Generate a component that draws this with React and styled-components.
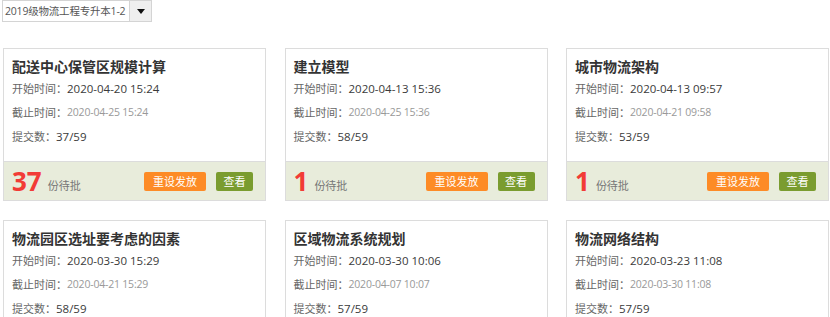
import React from "react";
import styled, { createGlobalStyle } from "styled-components";

const Global = createGlobalStyle`
  html, body { margin: 0; padding: 0; background: #fff; }
  body { font-family: "Open Sans", "Noto Sans CJK SC", sans-serif; color: #333; }
`;

const Page = styled.div`
  padding: 0 0 0 2px;
`;

const SelectWrap = styled.div`
  display: flex;
  width: fit-content;
  height: 22px;
  margin-bottom: 26px;
  box-sizing: border-box;
`;

const SelectText = styled.div`
  width: 127px;
  box-sizing: border-box;
  border: 1px solid #d4d4d4;
  border-right: none;
  padding: 0 1px 0 2px;
  font-size: 10.5px;
  letter-spacing: -0.2px;
  line-height: 20px;
  color: #555;
  white-space: nowrap;
`;

const SelectBtn = styled.div`
  width: 23px;
  box-sizing: border-box;
  border: 1px solid #d4d4d4;
  background: #efefef;
  display: flex;
  align-items: center;
  justify-content: center;
  &::after {
    content: "";
    border-left: 4px solid transparent;
    border-right: 4px solid transparent;
    border-top: 5px solid #111;
  }
`;

const Grid = styled.div`
  display: grid;
  grid-template-columns: repeat(3, 263px);
  column-gap: 18.5px;
  row-gap: 19px;
  padding-left: 1px;
`;

const Card = styled.div`
  border: 1px solid #dcdcdc;
  background: #fff;
  box-sizing: border-box;
`;

const Body = styled.div`
  padding: 7px 8px 13px;
`;

const Title = styled.div`
  font-family: "Noto Sans CJK SC", sans-serif;
  font-size: 14px;
  font-weight: 700;
  line-height: 20px;
  color: #333;
`;

const Row = styled.div`
  height: 24px;
  display: flex;
  align-items: center;
  font-size: 11px;
  color: #666;
  font-family: "Noto Sans CJK SC", sans-serif;
`;

const Value = styled.span`
  font-family: "Open Sans", "Noto Sans CJK SC", sans-serif;
  font-size: ${(p) => (p.$muted ? "10.5px" : "11.5px")};
  color: ${(p) => (p.$muted ? "#999" : "#3a3a3a")};
  letter-spacing: ${(p) => (p.$muted ? "-0.2px" : "0")};
`;

const Footer = styled.div`
  border-top: 1px solid #dcdcdc;
  background: #e8ecdb;
  height: 38px;
  display: flex;
  align-items: center;
  padding: 0 12px 0 8px;
`;

const Count = styled.span`
  font-family: "Open Sans", sans-serif;
  font-size: 26px;
  font-weight: 700;
  color: #f23b36;
  line-height: 1;
  margin-right: 6px;
`;

const Pending = styled.span`
  font-family: "Noto Sans CJK SC", sans-serif;
  font-size: 11px;
  color: #777;
  margin-top: 8px;
  flex: 1;
`;

const Btn = styled.button`
  border: none;
  border-radius: 2px;
  height: 19px;
  padding: 0;
  width: ${(p) => p.$w}px;
  margin-left: ${(p) => p.$ml || 0}px;
  background: ${(p) => p.$bg};
  color: #fff;
  font-family: "Noto Sans CJK SC", sans-serif;
  font-size: 11px;
  line-height: 19px;
  cursor: pointer;
`;

const data = [
  { t: "配送中心保管区规模计算", s: "2020-04-20 15:24", e: "2020-04-25 15:24", n: "37/59", p: 37 },
  { t: "建立模型", s: "2020-04-13 15:36", e: "2020-04-25 15:36", n: "58/59", p: 1 },
  { t: "城市物流架构", s: "2020-04-13 09:57", e: "2020-04-21 09:58", n: "53/59", p: 1 },
  { t: "物流园区选址要考虑的因素", s: "2020-03-30 15:29", e: "2020-04-21 15:29", n: "58/59", p: 1 },
  { t: "区域物流系统规划", s: "2020-03-30 10:06", e: "2020-04-07 10:07", n: "57/59", p: 2 },
  { t: "物流网络结构", s: "2020-03-23 11:08", e: "2020-03-30 11:08", n: "57/59", p: 2 },
];

export default function App() {
  return (
    <Page>
      <Global />
      <SelectWrap>
        <SelectText>2019级物流工程专升本1-2</SelectText>
        <SelectBtn />
      </SelectWrap>
      <Grid>
        {data.map((d, i) => (
          <Card key={i}>
            <Body>
              <Title>{d.t}</Title>
              <Row>开始时间：<Value>{d.s}</Value></Row>
              <Row>截止时间：<Value $muted>{d.e}</Value></Row>
              <Row>提交数：<Value>{d.n}</Value></Row>
            </Body>
            <Footer>
              <Count>{d.p}</Count>
              <Pending>份待批</Pending>
              <Btn $w={62} $bg="#fd8b26">重设发放</Btn>
              <Btn $w={37} $ml={10} $bg="#7a9c2f">查看</Btn>
            </Footer>
          </Card>
        ))}
      </Grid>
    </Page>
  );
}
